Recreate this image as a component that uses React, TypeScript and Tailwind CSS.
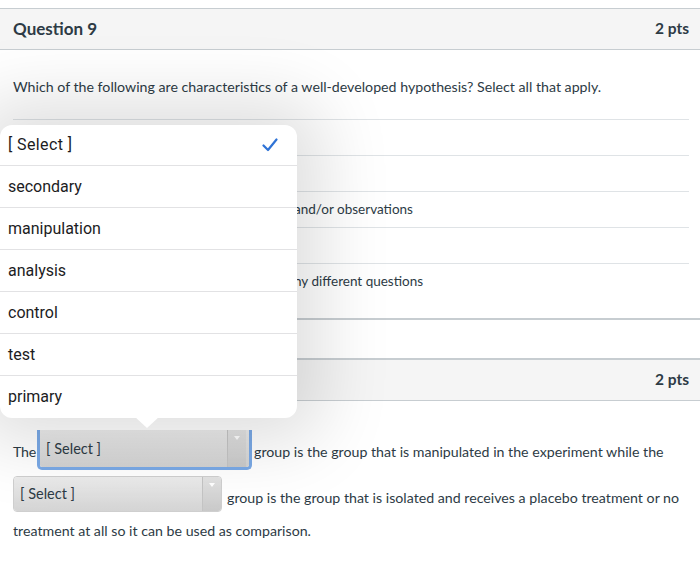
import React from "react";

const options = ["[ Select ]", "secondary", "manipulation", "analysis", "control", "test", "primary"];

function CardHeader({ title }: { title?: string }) {
  return (
    <div className="flex h-[41px] items-center justify-between border-b border-[#c7cdd1] bg-[#f5f5f5] pl-[13px] pr-[11px]">
      <span className="text-[17px] font-bold text-[#2d3b45]">{title ?? ""}</span>
      <span className="text-[15.5px] font-bold text-[#2d3b45]">2 pts</span>
    </div>
  );
}

function AnswerRow({ hidden, shown }: { hidden?: string; shown?: string }) {
  return (
    <div className="ml-[13px] mr-[11px] flex h-[36px] items-center border-t border-[#dfe3e6]">
      {shown ? (
        <>
          <span className="inline-block w-[281px] shrink-0 overflow-hidden whitespace-nowrap text-right text-[13.5px] text-[#2d3b45]">
            {hidden}
          </span>
          <span className="whitespace-nowrap text-[13.5px] text-[#2d3b45]">{shown}</span>
        </>
      ) : null}
    </div>
  );
}

function SelectArrow() {
  return (
    <div className="flex h-full w-[19px] items-start justify-center border-l border-[#c4c4c4] bg-gradient-to-b from-[#e3e3e3] to-[#c9c9c9] pt-[6px]">
      <div className="h-0 w-0 border-x-[3px] border-t-[4px] border-x-transparent border-t-white" />
    </div>
  );
}

export default function App() {
  return (
    <div className="relative h-[569px] w-[700px] overflow-hidden bg-white font-['Lato',sans-serif] text-[#2d3b45]">
      {/* Question 9 */}
      <div className="mt-[8px] border-t border-b-2 border-[#c7cdd1]">
        <CardHeader title="Question 9" />
        <div className="pt-[27px]">
          <p className="h-[20px] whitespace-nowrap pl-[13px] text-[14.2px] leading-[20px] text-[#2d3b45]">
            Which of the following are characteristics of a well-developed hypothesis? Select all that apply.
          </p>
          <div className="mt-[22px]">
            <AnswerRow />
            <AnswerRow />
            <AnswerRow hidden="It is based on previous research " shown="and/or observations" />
            <AnswerRow />
            <AnswerRow hidden="It can be used to answer ma" shown="ny different questions" />
            <div className="h-[19px]" />
          </div>
        </div>
      </div>

      {/* Question 10 */}
      <div className="mt-[38px] border-t-2 border-[#c7cdd1]">
        <CardHeader />
        <div className="pt-[28px] text-[14.2px] text-[#2d3b45]">
          <div className="flex h-[41px] items-center pl-[13px]">
            <span className="pt-[4px] tracking-[-0.2px]">The</span>
            <div className="ml-[1px] flex h-[40px] w-[215px] shrink-0 items-stretch overflow-hidden rounded-b-[5px] border-x-[3px] border-b-[3px] border-[#7aa9e6]">
              <div className="flex flex-1 items-start bg-gradient-to-b from-[#ececec] to-[#d2d2d2] pl-[6px] pt-[8px] text-[14.5px]">
                [ Select ]
              </div>
              <SelectArrow />
              <div className="w-[3px] bg-gradient-to-b from-[#ececec] to-[#d2d2d2]" />
            </div>
            <span className="ml-[2px] whitespace-nowrap pt-[4px]">
              group is the group that is manipulated in the experiment while the
            </span>
          </div>
          <div className="mt-[6px] flex h-[36px] items-end pl-[13px]">
            <div className="flex h-[36px] w-[209px] shrink-0 items-stretch overflow-hidden rounded-[4px] border border-[#cfcfcf]">
              <div className="flex flex-1 items-center bg-gradient-to-b from-[#ececec] to-[#d4d4d4] pl-[6px] pb-[1px] text-[14.5px]">
                [ Select ]
              </div>
              <SelectArrow />
            </div>
            <span className="ml-[5px] whitespace-nowrap pb-[4px] leading-[20px]">
              group is the group that is isolated and receives a placebo treatment or no
            </span>
          </div>
          <p className="mt-[9px] pl-[13px] leading-[20px]">
            treatment at all so it can be used as comparison.
          </p>
        </div>
      </div>

      {/* Open picker menu */}
      <div className="absolute left-0 top-[125px] w-[297px] rounded-[12px] bg-white font-['Roboto',sans-serif] text-[16px] text-[#1c1c1e] shadow-[0_0_70px_25px_rgba(0,0,0,0.13)]">
        {options.map((o, i) => (
          <div
            key={o}
            className={`flex items-center justify-between pl-[8px] pr-[19px] ${i === 0 ? "h-[41px]" : "h-[42px]"} ${
              i < options.length - 1 ? "border-b border-[#e2e2e4]" : ""
            }`}
          >
            <span className={i === 0 ? "tracking-[0.4px]" : ""}>{o}</span>
            {i === 0 ? (
              <svg width="16" height="14" viewBox="0 0 16 14" fill="none">
                <path d="M1.5 7.5 L6 12 L14.5 1.5" stroke="#2f73d6" strokeWidth="2.2" strokeLinecap="round" strokeLinejoin="round" />
              </svg>
            ) : null}
          </div>
        ))}
      </div>
      <div className="absolute left-[134px] top-[416px] h-0 w-0 border-x-[13px] border-t-[12px] border-x-transparent border-t-white" />
    </div>
  );
}
